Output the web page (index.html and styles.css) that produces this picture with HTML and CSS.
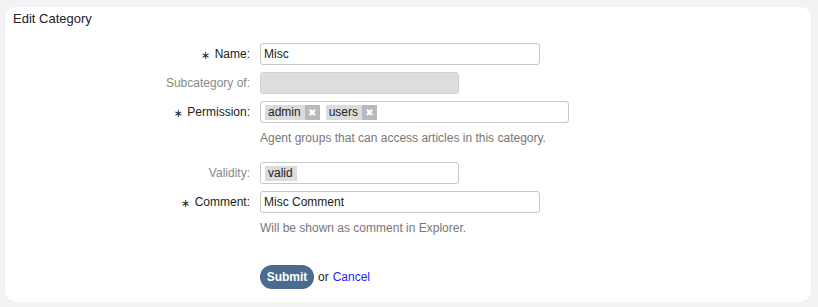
FILE: index.html
```html
<!DOCTYPE html>
<html lang="en">

<head>
    <meta charset="UTF-8">
    <meta name="viewport" content="width=device-width, initial-scale=1.0">
    <link rel="stylesheet" href="styles.css">
    <title>Edit Category</title>
</head>

<body>
    <div class="card">
        <h2 class="title">Edit Category</h2>
        <form class="form">
            <!-- name -->
            <label class="label required"><span class="req">&#8727;</span> Name:</label>
            <div class="field"><input class="input w280" type="text" value="Misc"></div>

            <!-- subcategory -->
            <label class="label">Subcategory of:</label>
            <div class="field"><div class="input w200 disabled"></div></div>

            <!-- permission -->
            <label class="label required"><span class="req">&#8727;</span> Permission:</label>
            <div class="field">
                <div class="input w310 tags">
                    <span class="tag">admin<span class="tagX">&#10006;</span></span>
                    <span class="tag">users<span class="tagX">&#10006;</span></span>
                </div>
            </div>
            <div></div>
            <p class="help">Agent groups that can access articles in this category.</p>

            <!-- validity -->
            <label class="label">Validity:</label>
            <div class="field">
                <div class="input w200 tags"><span class="tag plain">valid</span></div>
            </div>

            <!-- comment -->
            <label class="label required"><span class="req">&#8727;</span> Comment:</label>
            <div class="field"><input class="input w280" type="text" value="Misc Comment"></div>
            <div></div>
            <p class="help last">Will be shown as comment in Explorer.</p>

            <div></div>
            <div class="actions">
                <button type="button" class="submit">Submit</button>
                <span class="or">or</span>
                <a href="#" class="cancel">Cancel</a>
            </div>
        </form>
    </div>
</body>
</html>
```

FILE: styles.css
```css
* {
    box-sizing: border-box;
}

body {
    margin: 0;
    padding: 7px 7px 0 5px;
    background-color: #f3f3f5;
    font-family: "Liberation Sans", Arial, sans-serif;
    font-size: 12px;
    color: #222;
}

.card {
    background: #fff;
    border-radius: 10px;
    height: 295px;
    box-shadow: 0 1px 2px rgba(0, 0, 0, 0.06);
}

.title {
    margin: 0;
    padding: 4px 8px;
    font-size: 13px;
    font-weight: normal;
    line-height: 15px;
    color: #222;
}

.form {
    display: grid;
    grid-template-columns: 245px 1fr;
    column-gap: 10px;
    row-gap: 7px;
    align-items: center;
    margin-top: 13px;
}

.label {
    text-align: right;
    color: #888;
    line-height: 16px;
}

.label.required {
    color: #222;
}

.req {
    font-family: "DejaVu Sans", sans-serif;
    font-size: 11px;
    position: relative;
    top: 1px;
    margin-right: 1px;
}

.field {
    display: flex;
}

.input {
    height: 22px;
    border: 1px solid #c8c8c8;
    border-radius: 3px;
    padding: 0 3px;
    font-family: inherit;
    font-size: 12px;
    color: #222;
    background: #fff;
    outline: none;
}

.w200 { width: 199px; }
.w280 { width: 280px; }
.w310 { width: 309px; }

.disabled {
    background: #dedede;
    border-color: #d0d0d0;
}

.tags {
    display: flex;
    align-items: center;
    gap: 6px;
    padding: 0 4px;
}

.tag {
    display: flex;
    align-items: center;
    height: 15px;
    background: #dcdcdc;
    padding-left: 3px;
    line-height: 15px;
    font-size: 12px;
    color: #222;
}

.tag.plain {
    padding-right: 4px;
}

.tagX {
    display: inline-block;
    width: 15px;
    height: 15px;
    margin-left: 4px;
    background: #b9b9b9;
    color: #fff;
    font-family: "DejaVu Sans", sans-serif;
    font-size: 10px;
    font-weight: bold;
    text-align: center;
    line-height: 15px;
}

.help {
    margin: 0 0 9px;
    line-height: 16px;
    color: #777;
}

.help.last {
    margin-bottom: 22px;
}

.actions {
    display: flex;
    align-items: center;
    gap: 4px;
}

.submit {
    height: 24px;
    width: 54px;
    border: none;
    border-radius: 12px;
    background: #4a6a8e;
    color: #fff;
    font-family: inherit;
    font-size: 12px;
    font-weight: bold;
    padding: 0;
}

.or {
    color: #222;
}

.cancel {
    color: #2a1aff;
    text-decoration: none;
}
```
